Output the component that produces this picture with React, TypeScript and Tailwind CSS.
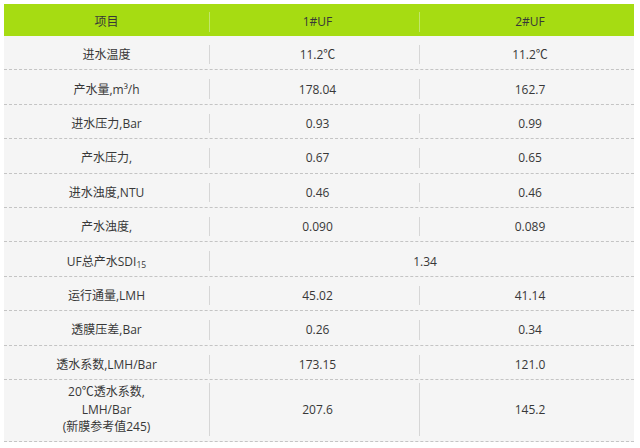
import React from "react"

type Row = { label: React.ReactNode; a: string; b?: string }

const ROWS: Row[] = [
    { label: "进水温度", a: "11.2℃", b: "11.2℃" },
    { label: "产水量,m³/h", a: "178.04", b: "162.7" },
    { label: "进水压力,Bar", a: "0.93", b: "0.99" },
    { label: "产水压力,", a: "0.67", b: "0.65" },
    { label: "进水浊度,NTU", a: "0.46", b: "0.46" },
    { label: "产水浊度,", a: "0.090", b: "0.089" },
    {
        label: (
            <span>
                UF总产水SDI<sub className="text-[8.5px]">15</sub>
            </span>
        ),
        a: "1.34",
    },
    { label: "运行通量,LMH", a: "45.02", b: "41.14" },
    { label: "透膜压差,Bar", a: "0.26", b: "0.34" },
    { label: "透水系数,LMH/Bar", a: "173.15", b: "121.0" },
]

const cols = "grid grid-cols-[205px_210px_215px]"

export default function App() {
    return (
        <div
            className="w-[640px] h-[448px] bg-white pt-[4px] pl-[4px] text-[12px] text-[#383838]"
            style={{ fontFamily: '"Open Sans", "Noto Sans CJK SC", sans-serif' }}
        >
            <div className="w-[630px] bg-[#f5f5f5]">
                {/* header */}
                <div className={`${cols} h-[32px] pt-[8px] pb-[4px] bg-[#a6dc12]`}>
                    <div className="flex items-center justify-center">项目</div>
                    <div className="flex items-center justify-center pl-[6px] border-l border-[#c2e66a]">1#UF</div>
                    <div className="flex items-center justify-center pl-[6px] border-l border-[#c2e66a]">2#UF</div>
                </div>

                {ROWS.map((row, i) => (
                    <div
                        key={i}
                        className={`${cols} h-[34.4px] pt-[9px] pb-[5px] border-b border-dashed border-[#c4c4c4] leading-[19px]`}
                    >
                        <div className="flex items-center justify-center">{row.label}</div>
                        {row.b === undefined ? (
                            <div className="col-span-2 flex items-center justify-center pl-[6px] border-l border-[#d6d6d6]">
                                {row.a}
                            </div>
                        ) : (
                            <>
                                <div className="flex items-center justify-center pl-[6px] border-l border-[#d6d6d6]">
                                    {row.a}
                                </div>
                                <div className="flex items-center justify-center pl-[6px] border-l border-[#d6d6d6]">
                                    {row.b}
                                </div>
                            </>
                        )}
                    </div>
                ))}

                <div className={`${cols} h-[62px] pt-[3px] pb-[5px] border-b border-dashed border-[#c4c4c4] leading-[17.5px]`}>
                    <div className="flex flex-col items-center justify-center text-center">
                        <span>20℃透水系数,</span>
                        <span>LMH/Bar</span>
                        <span>(新膜参考值245)</span>
                    </div>
                    <div className="flex items-center justify-center pl-[6px] border-l border-[#d6d6d6]">207.6</div>
                    <div className="flex items-center justify-center pl-[6px] border-l border-[#d6d6d6]">145.2</div>
                </div>
            </div>
        </div>
    )
}
